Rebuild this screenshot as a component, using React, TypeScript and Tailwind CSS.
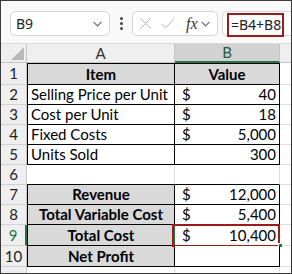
import React from 'react';

interface Row {
  n: number;
  a?: string;
  b?: string;
  kind: 'head' | 'item' | 'blank' | 'total';
  cur?: boolean;
  h: string;
  sel?: boolean;
}

const rows: Row[] = [
  { n: 1, a: 'Item', b: 'Value', kind: 'head', h: 'h-[22px]' },
  { n: 2, a: 'Selling Price per Unit', b: '40', kind: 'item', cur: true, h: 'h-[20px]' },
  { n: 3, a: 'Cost per Unit', b: '18', kind: 'item', cur: true, h: 'h-[20px]' },
  { n: 4, a: 'Fixed Costs', b: '5,000', kind: 'item', cur: true, h: 'h-[20px]' },
  { n: 5, a: 'Units Sold', b: '300', kind: 'item', h: 'h-[20px]' },
  { n: 6, kind: 'blank', h: 'h-[20px]' },
  { n: 7, a: 'Revenue', b: '12,000', kind: 'total', cur: true, h: 'h-[20px]' },
  { n: 8, a: 'Total Variable Cost', b: '5,400', kind: 'total', cur: true, h: 'h-[20px]' },
  { n: 9, a: 'Total Cost', b: '10,400', kind: 'total', cur: true, h: 'h-[21px]', sel: true },
  { n: 10, a: 'Net Profit', kind: 'total', h: 'h-[21px]' },
];

function Chevron() {
  return (
    <svg width="9" height="6" viewBox="0 0 9 6" fill="none" stroke="#6b6b6b" strokeWidth="1.2">
      <path d="M0.5 0.8 L4.5 4.8 L8.5 0.8" />
    </svg>
  );
}

export default function App() {
  return (
    <div className="w-[292px] h-[274px] overflow-hidden border border-[#3a3a3a] bg-white font-['Lato',sans-serif] text-black">
      {/* formula bar */}
      <div className="h-[42px] flex items-start pt-[10px] pl-[9px] bg-[#f9f9f9] font-['Noto_Sans',sans-serif]">
        <div className="w-[100px] h-[25px] rounded-[5px] border border-[#d6d6d6] bg-white flex items-center justify-between pl-[5px] pr-[7px]">
          <span className="text-[14px] leading-none text-[#222]">B9</span>
          <Chevron />
        </div>
        <div className="w-[22px] h-[25px] flex flex-col items-center justify-center gap-[2px]">
          <span className="w-[3px] h-[3px] rounded-full bg-[#444]" />
          <span className="w-[3px] h-[3px] rounded-full bg-[#444]" />
          <span className="w-[3px] h-[3px] rounded-full bg-[#444]" />
        </div>
        <div className="w-[86px] h-[25px] rounded-[5px] border border-[#d6d6d6] bg-white flex items-center pl-[7px] gap-[10px]">
          <svg width="11" height="11" viewBox="0 0 11 11" stroke="#b4b4b4" strokeWidth="1">
            <path d="M0.5 0.5 L10.5 10.5 M10.5 0.5 L0.5 10.5" />
          </svg>
          <svg width="13" height="10" viewBox="0 0 13 10" fill="none" stroke="#b4b4b4" strokeWidth="1">
            <path d="M0.5 5 L4.5 9 L12.5 0.5" />
          </svg>
          <div className="flex items-center gap-[3px] ml-[2px]">
            <span className="font-['Liberation_Serif',serif] italic text-[16px] leading-none text-[#333]">fx</span>
            <Chevron />
          </div>
        </div>
        <div className="flex-1 h-[25px] ml-[4px] rounded-l-[5px] border border-r-0 border-[#d6d6d6] bg-white pl-[4px]">
          <div className="w-[57px] h-[24px] mt-[1px] border-2 border-[#9e1b1b] flex items-center pl-[2px]">
            <span className="text-[14px] leading-none text-[#222]">=B4+B8</span>
          </div>
        </div>
      </div>

      {/* column headers */}
      <div className="flex h-[20px] border-t border-[#dadada]">
        <div className="w-[26px] border-r border-b border-[#c6c6c6] bg-[#efefef] flex items-end justify-end p-[2px]">
          <svg width="13" height="13" viewBox="0 0 13 13">
            <path d="M13 0 L13 13 L0 13 Z" fill="#b9b9b9" />
          </svg>
        </div>
        <div className="w-[148px] border-r border-b border-[#c6c6c6] bg-[#efefef] flex items-center justify-center text-[15px] text-[#333]">
          A
        </div>
        <div className="w-[105px] border-r border-[#c6c6c6] border-b-2 border-b-[#217346] bg-[#d2d2d2] flex items-center justify-center text-[15px] text-[#1d5e3a]">
          B
        </div>
        <div className="flex-1 border-b border-[#c6c6c6] bg-[#efefef]" />
      </div>

      {rows.map((r) => {
        const table = r.kind !== 'blank';
        const gray = r.kind === 'head' || r.kind === 'total';
        return (
          <div key={r.n} className={`flex ${r.h}`}>
            <div
              className={`w-[26px] bg-[#efefef] border-b border-[#d0d0d0] flex items-center justify-center text-[15px] ${
                r.sel ? 'border-r-2 border-r-[#217346] text-[#217346]' : 'border-r border-r-[#c6c6c6] text-[#222]'
              }`}
            >
              {r.n}
            </div>
            <div
              className={`w-[148px] flex items-center text-[15px] whitespace-nowrap ${
                table ? 'border-l border-r border-b border-black' : 'border-r border-r-[#dedede] border-b border-b-black'
              } ${r.n === 1 ? 'border-t' : ''} ${gray ? 'bg-[#d9d9d9] justify-center font-bold' : 'bg-white pl-[3px]'}`}
            >
              {r.a}
            </div>
            <div
              className={`relative w-[105px] flex items-center text-[15px] ${
                table ? 'border-r border-b border-black' : 'border-r border-r-[#dedede] border-b border-b-black'
              } ${r.n === 1 ? 'border-t bg-[#d9d9d9] justify-center font-bold' : 'bg-white justify-between pl-[7px] pr-[3px]'}`}
            >
              {r.n === 1 ? (
                r.b
              ) : (
                <>
                  <span>{r.cur ? '$' : ''}</span>
                  <span>{r.b}</span>
                </>
              )}
              {r.sel && (
                <>
                  <div className="absolute left-[-3px] top-[-1px] w-[108px] h-[23px] border-2 border-[#9e1b1b]" />
                  <div className="absolute left-[-1px] top-[1px] w-[1px] h-[19px] bg-[#217346]" />
                  <div className="absolute right-[-4px] bottom-[-3px] w-[5px] h-[5px] bg-[#217346] border border-white" />
                </>
              )}
            </div>
            <div className="flex-1 border-b border-[#dedede]" />
          </div>
        );
      })}
      <div className="flex h-[20px]">
        <div className="w-[26px] bg-[#efefef] border-r border-[#c6c6c6]" />
        <div className="w-[148px] border-r border-[#dedede]" />
        <div className="w-[105px] border-r border-[#dedede]" />
        <div className="flex-1" />
      </div>
    </div>
  );
}
